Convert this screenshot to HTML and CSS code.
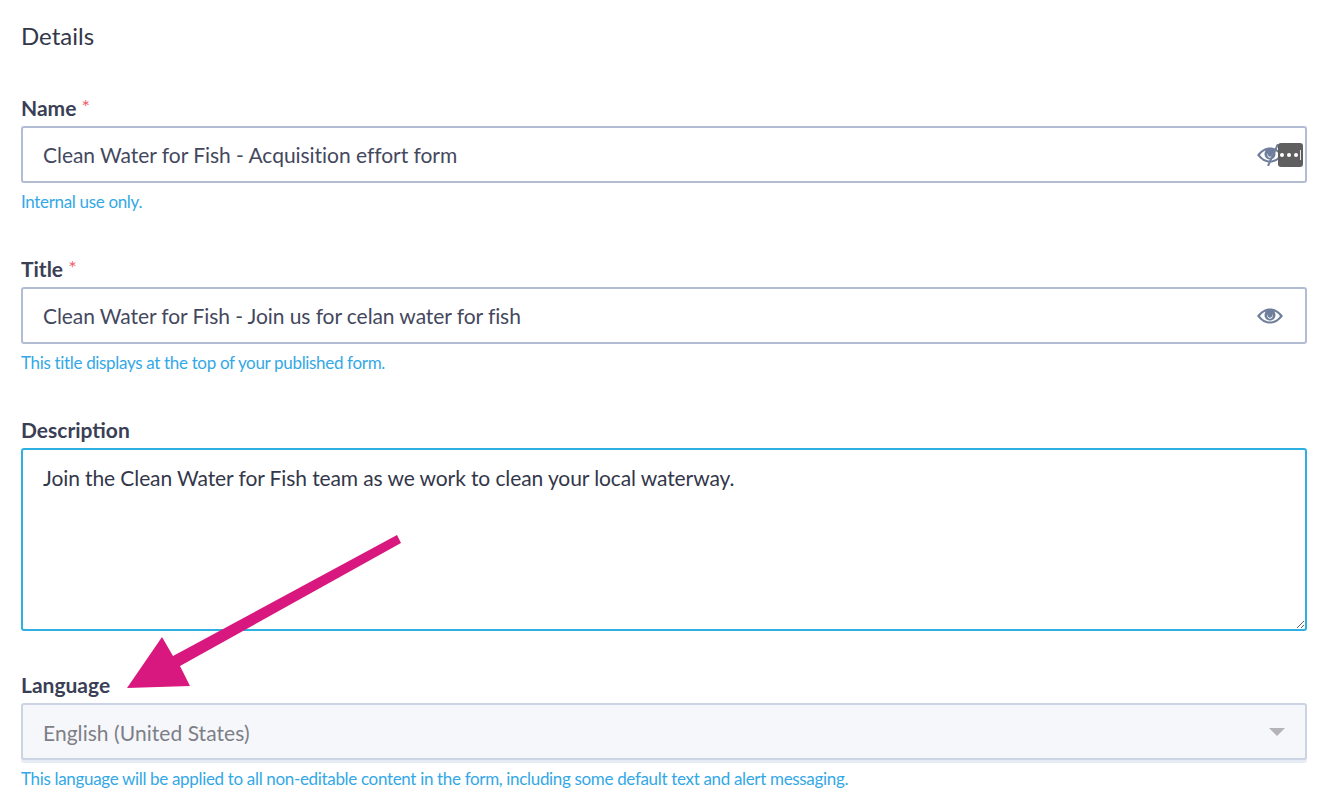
FILE: index.html
```html
<!DOCTYPE html>
<html lang="en">
<head>
<meta charset="utf-8">
<title>Details</title>
<link rel="stylesheet" href="styles.css">
</head>
<body>
<main class="form">
  <h2 class="heading">Details</h2>

  <section class="field field-name">
    <div class="label">Name <span class="req">*</span></div>
    <div class="input">
      <span class="value">Clean Water for Fish - Acquisition effort form</span>
      <svg class="eye" viewBox="0 0 26 16" aria-hidden="true">
        <path class="eye-shape" d="M0 8C4 3 8 .5 13 .5S22 3 26 8c-4 5-8 7.500-13 7.500S4 13 0 8z"/>
        <path class="eye-gap" d="M3 8c1.500-2 3.500-3.600 5.600-4.500C7.900 4.600 7.500 5.700 7.500 7c0 3 2.400 5.500 5.500 5.500s5.500-2.500 5.500-5.500c0-1.300-.4-2.400-1.100-3.500 2.100.9 4.100 2.500 5.600 4.500-2.500 3.200-5.500 5.500-10 5.500S5.500 11.200 3 8z"/>
        <circle class="eye-shape" cx="13" cy="7" r="4"/>
        <path class="eye-gap" d="M10.500 6c0 2 1 3.800 2.500 3.800S15.500 8 15.500 6c.8 2-.3 4.800-2.500 4.800S9.700 8 10.500 6z"/>
      </svg>
      <svg class="slash" viewBox="0 0 12 22" aria-hidden="true"><path d="M11 0 1 22"/></svg>
      <span class="dots"><i></i><i></i><i></i><b></b></span>
    </div>
    <div class="hint">Internal use only.</div>
  </section>

  <section class="field field-title">
    <div class="label">Title <span class="req">*</span></div>
    <div class="input">
      <span class="value">Clean Water for Fish - Join us for celan water for fish</span>
      <svg class="eye" viewBox="0 0 26 16" aria-hidden="true">
        <path class="eye-shape" d="M0 8C4 3 8 .5 13 .5S22 3 26 8c-4 5-8 7.500-13 7.500S4 13 0 8z"/>
        <path class="eye-gap" d="M3 8c1.500-2 3.500-3.600 5.600-4.500C7.900 4.600 7.500 5.700 7.500 7c0 3 2.400 5.500 5.500 5.500s5.500-2.500 5.500-5.500c0-1.300-.4-2.400-1.100-3.500 2.100.9 4.100 2.500 5.600 4.500-2.500 3.200-5.500 5.500-10 5.500S5.500 11.200 3 8z"/>
        <circle class="eye-shape" cx="13" cy="7" r="4"/>
        <path class="eye-gap" d="M10.500 6c0 2 1 3.800 2.500 3.800S15.500 8 15.500 6c.8 2-.3 4.800-2.500 4.800S9.700 8 10.500 6z"/>
      </svg>
    </div>
    <div class="hint">This title displays at the top of your published form.</div>
  </section>

  <section class="field field-desc">
    <div class="label">Description</div>
    <textarea class="textarea" spellcheck="false">Join the Clean Water for Fish team as we work to clean your local waterway.</textarea>
  </section>

  <section class="field field-lang">
    <div class="label">Language</div>
    <div class="input select">
      <span class="value">English (United States)</span>
      <span class="caret"></span>
    </div>
    <div class="hint">This language will be applied to all non-editable content in the form, including some default text and alert messaging.</div>
  </section>
</main>

<svg class="arrow" viewBox="0 0 1332 810" aria-hidden="true">
  <path d="M397 535 401 543 180 666 190 686 127 688 162 637 173 656z"/>
</svg>
</body>
</html>
```

FILE: styles.css
```css
* { box-sizing: border-box; }

html, body {
  margin: 0;
  height: 100%;
  background: #fff;
}

body {
  position: relative;
  overflow: hidden;
  font-family: Lato, "Liberation Sans", sans-serif;
  color: #3a3f56;
}

.form {
  display: flex;
  flex-direction: column;
  padding: 21px 25px 0 21px;
}

.heading {
  margin: 0;
  font-size: 24px;
  line-height: 30px;
  font-weight: 400;
  color: #33374a;
}

.field { display: flex; flex-direction: column; }
.field-name { margin-top: 44px; }
.field-title { margin-top: 44px; }
.field-desc { margin-top: 44px; }
.field-lang { margin-top: 41px; }

.label {
  font-size: 21px;
  line-height: 26px;
  font-weight: 700;
  color: #3a3f56;
  margin-bottom: 5px;
}

.req {
  font-weight: 400;
  font-size: 20px;
  line-height: 1;
  vertical-align: 2px;
  color: #f0616d;
}

.input {
  display: flex;
  align-items: center;
  height: 57px;
  padding: 0 20px;
  border: 2px solid #b2bcd2;
  border-radius: 3px;
  position: relative;
}

.value {
  flex: 1;
  font-size: 21px;
  letter-spacing: -0.08px;
  color: #44485e;
}

.field-name .value { letter-spacing: -0.04px; }

.eye {
  width: 26px;
  height: 16px;
  flex: none;
  margin-right: 2px;
}

.eye-shape { fill: #6f7f9b; }
.eye-gap { fill: #fff; }

.slash {
  position: absolute;
  right: 26px;
  top: 16px;
  width: 12px;
  height: 22px;
}

.slash path { stroke: #6f7f9b; stroke-width: 2; fill: none; }

.dots {
  position: absolute;
  right: 2px;
  top: 15px;
  width: 25px;
  height: 24px;
  display: flex;
  align-items: center;
  justify-content: flex-end;
  gap: 3px;
  padding-right: 2px;
  background: #5f5f5f;
  border-radius: 3px;
}

.dots i {
  width: 4px;
  height: 4px;
  border-radius: 50%;
  background: #fff;
}

.dots b {
  width: 1px;
  height: 10px;
  margin-left: -1px;
  background: #e8e8e8;
}

.hint {
  margin-top: 9px;
  font-size: 17px;
  line-height: 20px;
  letter-spacing: -0.33px;
  color: #34a8e6;
}

.textarea {
  display: block;
  width: 100%;
  height: 183px;
  padding: 14px 20px;
  border: 2px solid #2fb0e0;
  border-radius: 3px;
  outline: none;
  font-family: inherit;
  font-size: 21px;
  line-height: 28px;
  letter-spacing: -0.1px;
  color: #33374a;
  resize: both;
}

.select {
  background: #f6f7fa;
  border-color: #ccd3e3;
  box-shadow: 0 3px 0 #e6ebf5;
}

.select .value {
  padding-top: 2px;
  letter-spacing: 0.05px;
  color: #7d7f88;
}

.caret {
  width: 0;
  height: 0;
  border-left: 8px solid transparent;
  border-right: 8px solid transparent;
  border-top: 8px solid #b4b4b8;
}

.arrow {
  position: absolute;
  left: 0;
  top: 0;
  width: 1332px;
  height: 810px;
  pointer-events: none;
}

.arrow path { fill: #d9187f; }
```
